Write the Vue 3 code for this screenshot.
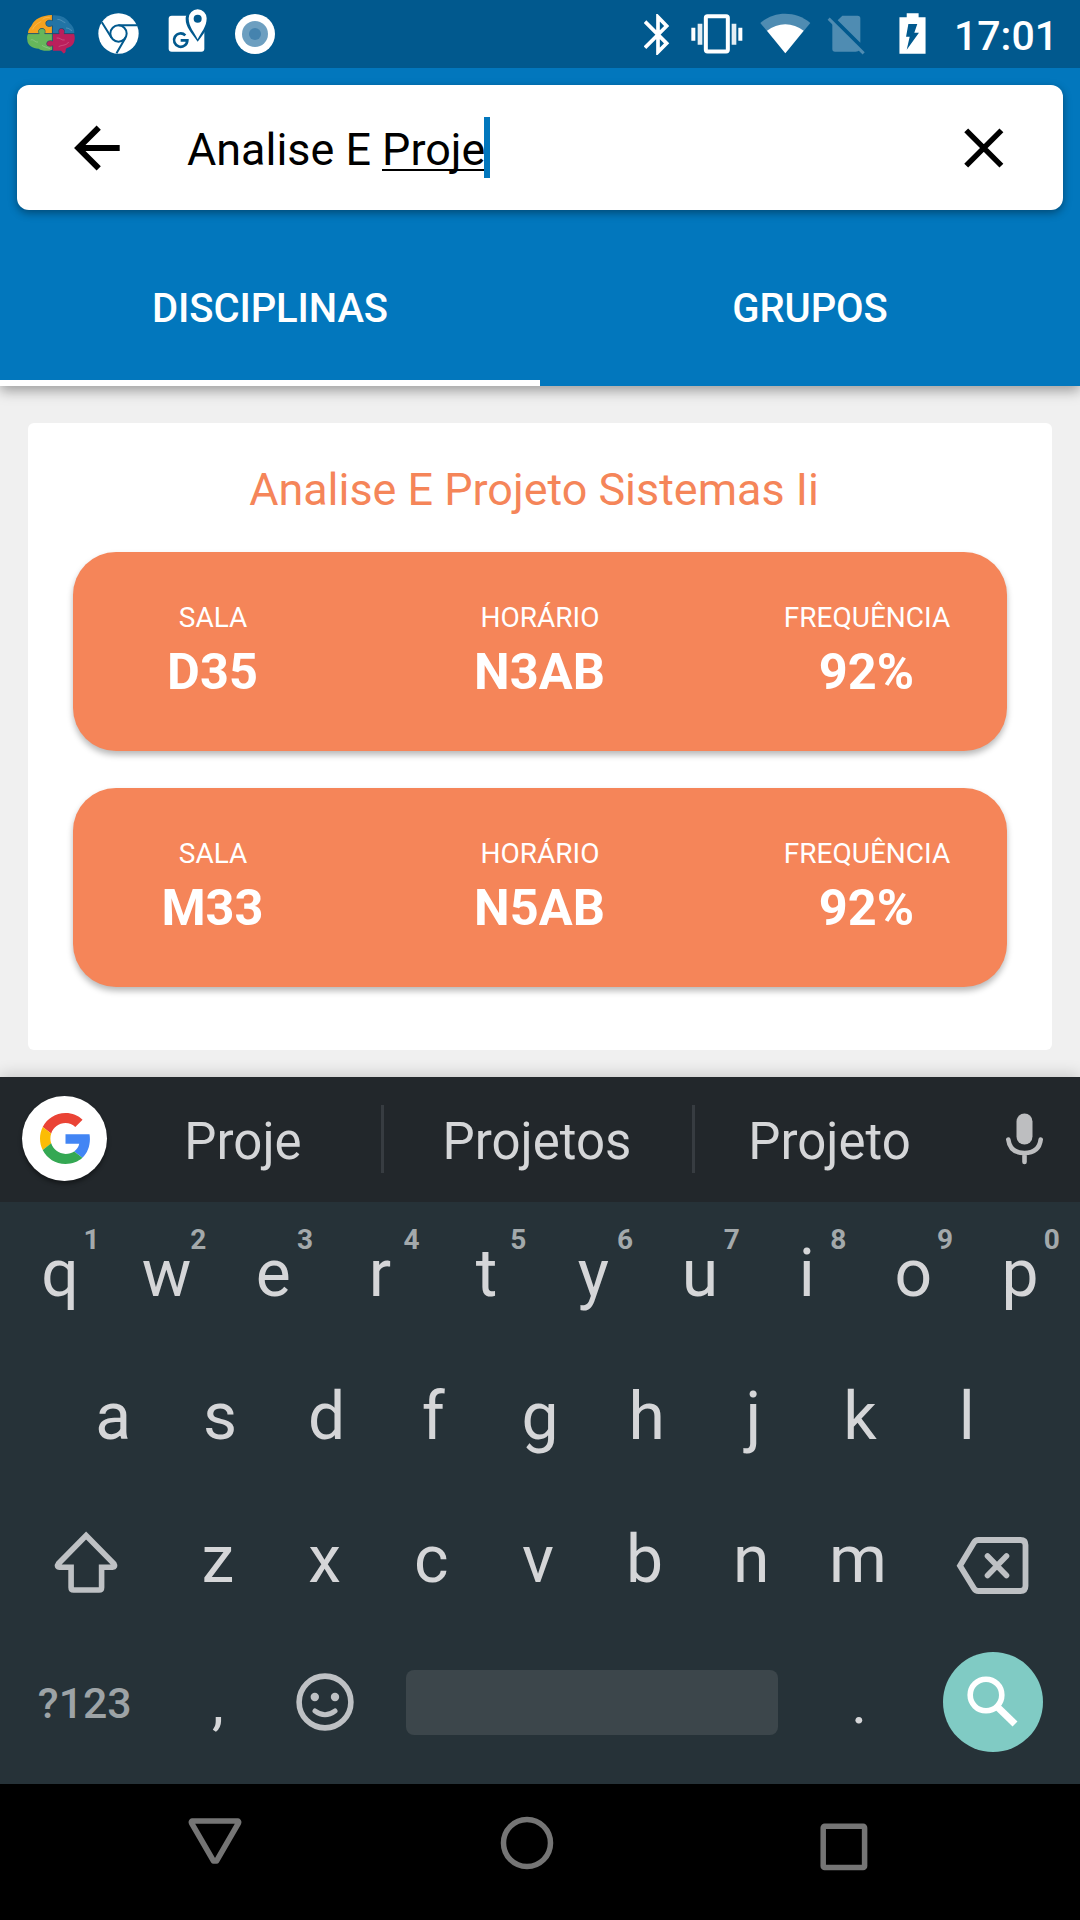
<script setup>
const suggestions = ['Proje', 'Projetos', 'Projeto']
const classes = [
  { sala: 'D35', horario: 'N3AB', frequencia: '92%' },
  { sala: 'M33', horario: 'N5AB', frequencia: '92%' },
]
const row1 = [...'qwertyuiop'].map((k, i) => ({ k, hint: (i + 1) % 10 }))
const row2 = [...'asdfghjkl']
const row3 = [...'zxcvbnm']
</script>

<template>
  <div class="screen">
    <header class="appbar">
      <div class="status">
        <!-- puzzle brain -->
        <svg class="brain" viewBox="78 42 150 120" width="50" height="40">
          <path fill="#f5a21f" d="M84 100C84 88 92 82 96 74C104 58 124 46 156 45V62C144 58 136 62 137 71C138 80 148 81 156 77V100H134C137 92 134 85 126 85C117 85 113 93 118 100Z" />
          <path fill="#2274a6" d="M158 46C182 44 200 54 208 68C218 76 224 88 223 99H192C196 91 192 85 184 85C177 85 174 92 177 99H158V77C150 82 138 80 138 71C138 62 148 58 158 62Z" />
          <path fill="#66b65b" d="M84 102H117C112 94 116 86 126 86C135 86 138 94 134 102H157V123C148 120 140 124 140 131C140 138 148 140 157 137V149C142 155 126 153 116 146C98 146 82 136 82 120C80 112 82 106 84 102Z" />
          <path fill="#bb1f5c" d="M159 101H178C174 92 177 86 184 86C192 86 196 93 192 101H222C227 114 224 130 214 138C206 144 198 142 197 150C198 156 195 161 190 160L183 152H159V138C150 141 140 138 140 131C140 124 150 120 159 124Z" />
          <g fill="none" stroke="#fff" stroke-opacity=".2" stroke-width="3">
            <path d="M98 88C104 74 114 70 124 64M128 58C138 50 146 52 150 54M172 58C184 58 188 66 196 68M198 84C208 84 210 90 216 92M92 120C102 116 104 128 114 126M126 136C134 142 142 142 150 146M170 114C180 112 184 122 194 120M176 140C186 134 198 138 206 126" />
          </g>
          <path d="M157 45V62C146 58 137 62 137.500 71C138 80 148 81 157 77V123C148 120 140 124 140 131C140 138 148 140 158 137V150M84 101H118C112 93 117 85.500 126 85.500C135 85.500 138 93 134 101H178C174 92 177 85.500 184 85.500C192 85.500 196 93 192 101H223" fill="none" stroke="#2b4a5e" stroke-opacity=".6" stroke-width="2.500" />
        </svg>
        <!-- browser -->
        <svg class="chrome" viewBox="296 40 122 123" width="41" height="41">
          <circle cx="357" cy="101.5" r="60.5" fill="#fff" />
          <circle cx="357" cy="101.5" r="24.5" fill="none" stroke="#01598e" stroke-width="6" />
          <path d="M357 77H414M336 114L307 68M378 114L351 161" fill="none" stroke="#01598e" stroke-width="6" />
        </svg>
        <!-- map -->
        <svg class="map" viewBox="505 28 120 132" width="40" height="44">
          <rect x="507" y="48" width="107" height="108" rx="9" fill="#fff" />
          <path d="M594 126C574 98 558 82 558 58A36 36 0 0 1 630 58C630 82 614 98 594 126Z" fill="#01598e" />
          <path d="M594 119C584 98 567 82 567 56A27 27 0 0 1 621 56C621 82 604 98 594 119Z" fill="#fff" />
          <circle cx="594" cy="57" r="12" fill="#01598e" />
          <path d="M557 107A20 20 0 1 0 563 122H543" fill="none" stroke="#01598e" stroke-width="8" />
        </svg>
        <!-- record dot -->
        <svg class="dot" viewBox="0 0 40 40" width="40" height="40">
          <circle cx="20" cy="20" r="20" fill="#fff" />
          <circle cx="20" cy="20" r="13" fill="#6d9fc0" />
          <circle cx="20" cy="20" r="6" fill="#4583ae" />
        </svg>
        <span class="spacer"></span>
        <svg class="bt" viewBox="75 40 78 123" width="26" height="41">
          <path d="M78 63L143 128L117 154V49L143 76L78 141" fill="none" stroke="#fff" stroke-width="11" />
        </svg>
        <svg class="vib" viewBox="215 43 156 120" width="52" height="40">
          <rect x="259.500" y="49.500" width="66" height="106" rx="5" fill="none" stroke="#fff" stroke-width="12" />
          <path d="M216 84H228V123H216ZM357 84H369V123H357Z" fill="#fff" />
          <path d="M235 72H249V135H235ZM337 72H351V135H337Z" fill="#e4eef4" />
        </svg>
        <svg class="wifi" viewBox="419 40 153 123" width="51" height="41">
          <path d="M420 70C462 33 527 33 570 70L495 161Z" fill="#4f8cb2" />
          <path d="M440 93C472 67 518 67 550 93L495 161Z" fill="#fff" />
        </svg>
        <svg class="sim" viewBox="620 46 114 120" width="38" height="40">
          <path d="M652 62L666 48H712Q720 48 720 56V129ZM636 70L718 151Q714 156 706 156H644Q636 156 636 148Z" fill="#4f8cb2" />
          <path d="M625 57L730 161" stroke="#4f8cb2" stroke-width="9" />
        </svg>
        <svg class="bat" viewBox="834 38 81 124" width="27" height="41">
          <path d="M857 39H893V51H914V161H835V51H857Z" fill="#fff" />
          <path d="M862 71H889L880 98H894L857 149L866 110H855Z" fill="#01598e" />
        </svg>
        <span class="clock">17:01</span>
      </div>

      <div class="search">
        <svg viewBox="72 122 52 52" width="52" height="52">
          <path d="M98.700 127.600L78.300 148L98.700 168.400M79 148H119.700" fill="none" stroke="#000" stroke-width="6" />
        </svg>
        <div class="query">Analise E&nbsp;<span class="composing">Proje</span><i class="caret"></i></div>
        <svg viewBox="962 126 44 44" width="44" height="44">
          <path d="M966.200 130.400L1001.400 165.600M1001.400 130.400L966.200 165.600" fill="none" stroke="#000" stroke-width="5.500" />
        </svg>
      </div>

      <nav class="tabs">
        <div class="tab active">DISCIPLINAS</div>
        <div class="tab">GRUPOS</div>
      </nav>
    </header>

    <main class="content">
      <section class="card">
        <h1 class="title">Analise E Projeto Sistemas Ii</h1>
        <div v-for="c in classes" :key="c.sala" class="pill">
          <div class="cell side"><span class="label">SALA</span><b class="value">{{ c.sala }}</b></div>
          <div class="cell"><span class="label">HORÁRIO</span><b class="value">{{ c.horario }}</b></div>
          <div class="cell side"><span class="label">FREQUÊNCIA</span><b class="value">{{ c.frequencia }}</b></div>
        </div>
      </section>
    </main>

    <section class="keyboard">
      <div class="strip">
        <div class="gbtn">
          <svg viewBox="0 0 48 48" width="51" height="51">
            <path fill="#ea4335" d="M24 9.500c3.540 0 6.710 1.220 9.210 3.600l6.850-6.850C35.900 2.380 30.470 0 24 0 14.620 0 6.510 5.380 2.560 13.220l7.980 6.190C12.430 13.720 17.740 9.500 24 9.500z" />
            <path fill="#4285f4" d="M46.980 24.550c0-1.570-.15-3.090-.38-4.550H24v9.020h12.940c-.58 2.960-2.260 5.480-4.780 7.180l7.730 6c4.510-4.180 7.090-10.360 7.090-17.650z" />
            <path fill="#fbbc05" d="M10.530 28.590c-.48-1.450-.76-2.990-.76-4.590s.27-3.140.76-4.590l-7.980-6.190C.92 16.460 0 20.120 0 24c0 3.880.92 7.540 2.560 10.780l7.970-6.190z" />
            <path fill="#34a853" d="M24 48c6.480 0 11.930-2.130 15.890-5.810l-7.730-6c-2.150 1.450-4.920 2.300-8.160 2.300-6.260 0-11.570-4.220-13.470-9.910l-7.980 6.190C6.510 42.620 14.620 48 24 48z" />
          </svg>
        </div>
        <div v-for="s in suggestions" :key="s" class="sugg">{{ s }}</div>
        <svg class="mic" viewBox="1004 1111 42 55" width="42" height="55" fill="none" stroke="#bdbec0">
          <rect x="1016.500" y="1113.500" width="16" height="31" rx="8" fill="#bdbec0" stroke="none" />
          <path d="M1008.300 1139.500C1009.500 1149 1016 1153 1024.500 1153C1033 1153 1039.500 1149 1040.700 1139.500M1024.500 1153V1162" stroke-width="4.600" stroke-linecap="round" />
        </svg>
      </div>

      <div class="row">
        <div v-for="x in row1" :key="x.k" class="key">{{ x.k }}<sup class="hint">{{ x.hint }}</sup></div>
      </div>
      <div class="row">
        <div v-for="k in row2" :key="k" class="key">{{ k }}</div>
      </div>
      <div class="row">
        <div class="edge left">
          <svg viewBox="52 1529 68 66" width="68" height="66">
            <path d="M85.700 1535.500L113.500 1563.700Q115.500 1567 112 1567.300H101.200V1587.500Q101.200 1590 98.700 1590H73.200Q70.700 1590 70.700 1587.500V1567.300H59.500Q55.500 1567 58 1563.700Z" transform="translate(.4 0)" fill="none" stroke="#bec1c4" stroke-width="5.600" />
          </svg>
        </div>
        <div v-for="k in row3" :key="k" class="key">{{ k }}</div>
        <div class="edge right">
          <svg viewBox="955 1535 76 61" width="76" height="61" fill="none" stroke="#bec1c4">
            <path d="M960 1565.700L974 1542.500Q975.500 1540 978.500 1540H1020.500Q1025.500 1540 1025.500 1545V1586Q1025.500 1591 1020.500 1591H978.500Q975.500 1591 974 1588.500Z" stroke-width="5.800" />
            <path d="M987.500 1556L1006.500 1575.500M1006.500 1556L987.500 1575.500" stroke-width="5.600" stroke-linecap="round" />
          </svg>
        </div>
      </div>
      <div class="row">
        <div class="edge left sym">?123</div>
        <div class="key punct">,</div>
        <div class="key emoji">
          <svg viewBox="0 0 58 58" width="58" height="58" fill="none" stroke="#bec1c4">
            <circle cx="29" cy="29" r="25.900" stroke-width="5.600" />
            <circle cx="18.800" cy="24" r="4.200" fill="#bec1c4" stroke="none" />
            <circle cx="39" cy="24" r="4.200" fill="#bec1c4" stroke="none" />
            <path d="M19 38Q29 45.500 39 38" stroke-width="5" stroke-linecap="round" />
          </svg>
        </div>
        <div class="space"></div>
        <div class="key punct">.</div>
        <div class="edge right">
          <div class="go">
            <svg viewBox="943 1652 100 100" width="100" height="100" fill="none" stroke="#fff">
              <circle cx="986" cy="1695" r="15.800" stroke-width="5.600" />
              <path d="M998 1707.500L1015 1724" stroke-width="7" />
            </svg>
          </div>
        </div>
      </div>
    </section>

    <footer class="navbar">
      <svg class="back" viewBox="187 1816 56 50" width="56" height="50">
        <path d="M192 1821H238Q239 1822 238.500 1823L216.500 1861H213.500L191.500 1823Q191 1822 192 1821Z" fill="none" stroke="#757575" stroke-width="5.500" stroke-linejoin="round" />
      </svg>
      <svg class="home" viewBox="0 0 54 54" width="54" height="54">
        <circle cx="27" cy="27" r="23.500" fill="none" stroke="#757575" stroke-width="5.500" />
      </svg>
      <svg class="recent" viewBox="0 0 48 48" width="48" height="48">
        <rect x="3.200" y="3.200" width="41.400" height="41.400" rx="1.500" fill="none" stroke="#757575" stroke-width="5.500" />
      </svg>
    </footer>
  </div>
</template>

<style>
body {
  margin: 0;
  background: #000;
}
</style>

<style scoped>
.screen {
  width: 1080px;
  height: 1920px;
  overflow: hidden;
  display: flex;
  flex-direction: column;
  font-family: Roboto, sans-serif;
  background: #f0f0f0;
}
svg {
  display: block;
  flex: none;
}
.appbar {
  height: 386px;
  background: #0277bd;
  box-shadow: 0 5px 12px rgba(0, 0, 0, 0.34);
  position: relative;
  z-index: 1;
}
.status {
  height: 68px;
  background: #01598e;
  display: flex;
  align-items: flex-start;
  padding: 13px 32px 0 26px;
  box-sizing: border-box;
}
.brain { margin-top: 1px; }
.chrome { margin-left: 22px; }
.map { margin: -4px 0 0 29px; }
.dot { margin: 1px 0 0 27px; }
.spacer { flex: 1; }
.bt { margin-top: 1px; }
.vib { margin: 1px 0 0 21px; }
.wifi { margin-left: 17px; }
.sim { margin: 2px 0 0 16px; }
.bat { margin-left: 34px; }
.clock {
  margin-left: 28px;
  width: 94px;
  line-height: 46px;
  font-size: 41px;
  font-weight: 500;
  color: #fff;
  white-space: nowrap;
}
.search {
  margin: 17px 17px 0;
  height: 125px;
  box-sizing: border-box;
  padding: 0 57px 0 55px;
  border-radius: 12px;
  background: #fff;
  box-shadow: 0 3px 8px rgba(0, 0, 0, 0.38);
  display: flex;
  align-items: center;
}
.query {
  flex: 1;
  margin-left: 63px;
  display: flex;
  align-items: center;
  font-size: 44.900px;
  line-height: 56px;
  padding-top: 4px;
  color: #000;
}
.composing {
  background: linear-gradient(#000, #000) 0 47px / 100% 2px no-repeat;
}
.caret {
  width: 6px;
  height: 61px;
  margin: -4px 0 0 -1px;
  background: #0277bd;
}
.tabs {
  margin-top: 21px;
  height: 155px;
  display: flex;
}
.tab {
  flex: 1;
  box-sizing: border-box;
  text-align: center;
  line-height: 156px;
  height: 155px;
  font-size: 40px;
  letter-spacing: -0.100px;
  font-weight: 500;
  color: #fff;
}
.tab.active {
  box-shadow: inset 0 -6px #fff;
}
.content {
  height: 691px;
  box-sizing: border-box;
  padding: 37px 28px 27px;
}
.card {
  height: 627px;
  box-sizing: border-box;
  border-radius: 6px;
  background: #fff;
  padding: 4px 45px 0;
}
.title {
  margin: 0;
  padding-right: 12px;
  font-weight: 400;
  font-size: 44.900px;
  line-height: 125px;
  text-align: center;
  color: #f58559;
}
.pill {
  height: 199px;
  box-sizing: border-box;
  margin-bottom: 37px;
  border-radius: 43px;
  background: #f58559;
  box-shadow: 0 4px 6px rgba(0, 0, 0, 0.28);
  display: flex;
  color: #fff;
  padding-top: 49px;
}
.cell {
  flex: 1;
  display: flex;
  flex-direction: column;
  align-items: center;
  gap: 7px;
}
.side {
  flex: 0 0 280px;
}
.label {
  font-size: 28px;
  line-height: 34px;
}
.value {
  font-size: 50.500px;
  line-height: 60px;
  font-weight: 700;
}
.cell .value {
  margin-right: 1px;
}
.keyboard {
  height: 707px;
  background: #263238;
  color: #d5d6d8;
  box-shadow: 0 -3px 14px rgba(0, 0, 0, 0.16);
  position: relative;
}
.strip {
  height: 125px;
  box-sizing: border-box;
  padding: 0 34px 0 22px;
  background: #22272b;
  display: flex;
  align-items: center;
}
.gbtn {
  width: 85px;
  height: 85px;
  margin: -2px 0 0;
  border-radius: 50%;
  background: #fff;
  box-shadow: 0 3px 4px rgba(0, 0, 0, 0.4);
  display: flex;
  align-items: center;
  justify-content: center;
}
.gbtn svg {
  margin-left: 1px;
}
.sugg {
  box-sizing: border-box;
  width: 274px;
  height: 68px;
  margin-top: -1px;
  padding-right: 2px;
  line-height: 73px;
  font-size: 51px;
  text-align: center;
}
.sugg + .sugg {
  width: 311px;
  border-left: 3px solid #373c41;
}
.sugg + .sugg + .sugg {
  width: 274px;
}
.mic {
  margin: -2px 0 0 auto;
}
.row {
  height: 143px;
  display: flex;
  justify-content: center;
}
.key {
  flex: none;
  width: 106.700px;
  height: 143px;
  line-height: 144px;
  text-align: center;
  font-size: 66px;
  position: relative;
  display: flex;
  align-items: center;
  justify-content: center;
}
.hint {
  position: absolute;
  left: 71px;
  width: 28px;
  top: 22px;
  line-height: 32px;
  font-size: 28px;
  font-weight: 700;
  color: #a3a9ab;
}
.edge {
  box-sizing: border-box;
  display: flex;
  align-items: center;
  justify-content: center;
}
.edge.left {
  flex: none;
  width: 164.500px;
  padding-left: 7px;
}
.edge.right {
  flex: 1;
  padding-right: 6px;
}
.edge.left svg {
  margin-top: 4px;
}
.edge.right svg {
  margin-top: 12px;
}
.edge.sym {
  padding-left: 5px;
  font-size: 42.800px;
  font-weight: 500;
  color: #9da3a6;
}
.punct {
  font-size: 60px;
}
.emoji svg {
  margin-top: -1px;
}
.space {
  align-self: center;
  flex: none;
  width: 372px;
  height: 65px;
  margin: 0 28px;
  border-radius: 8px;
  background: #3c464b;
}
.go {
  width: 100px;
  height: 100px;
  margin-top: -1px;
  border-radius: 50%;
  background: #80cbc4;
}
.edge.right .go svg {
  margin: 0;
}
.navbar {
  height: 136px;
  background: #000;
  display: flex;
  align-items: flex-start;
}
.back { margin: 32px 0 0 187px; }
.home { margin: 32px 0 0 257px; }
.recent { margin: 39px 0 0 266px; }
</style>
